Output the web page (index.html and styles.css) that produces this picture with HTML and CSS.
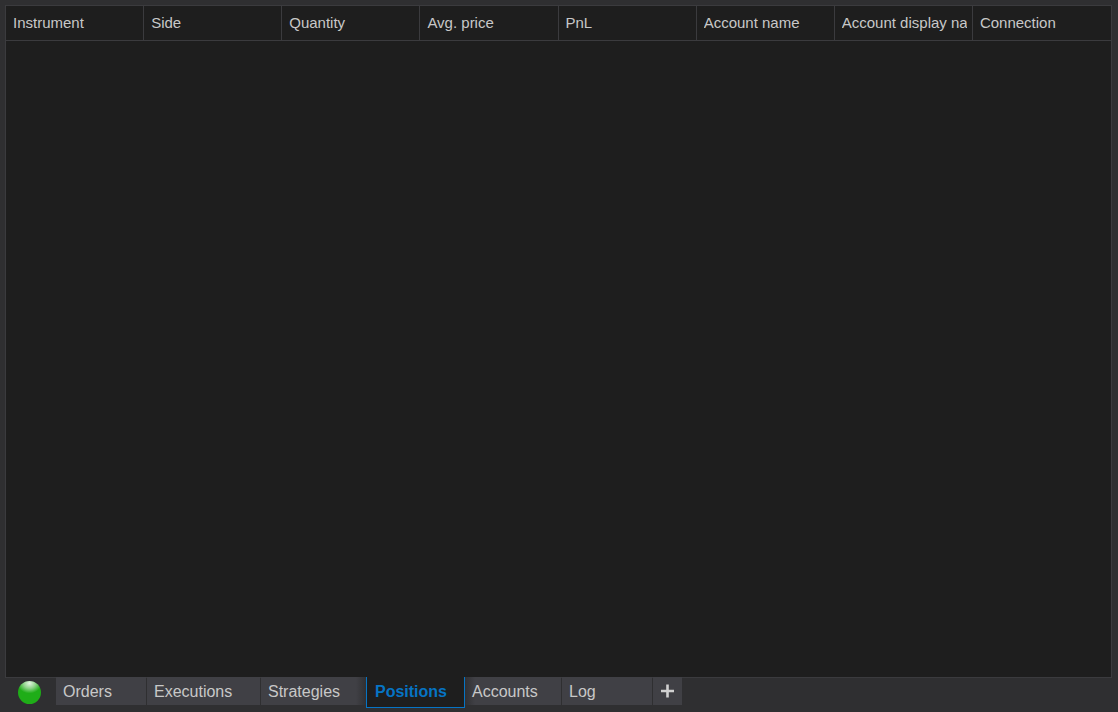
FILE: index.html
```html
<!DOCTYPE html>
<html lang="en">
<head>
    <meta charset="UTF-8">
    <meta name="viewport" content="width=device-width, initial-scale=1.0">
    <title>Positions</title>
    <link rel="stylesheet" href="styles.css">
</head>
<body>
    <div class="window">
        <main class="grid-panel">
            <table class="positions-table">
                <thead>
                    <tr>
                        <th><div class="label">Instrument</div></th>
                        <th><div class="label">Side</div></th>
                        <th><div class="label">Quantity</div></th>
                        <th><div class="label">Avg. price</div></th>
                        <th><div class="label">PnL</div></th>
                        <th><div class="label">Account name</div></th>
                        <th><div class="label">Account display na</div></th>
                        <th><div class="label">Connection</div></th>
                    </tr>
                </thead>
                <tbody>
                    <!-- Position rows will go here -->
                </tbody>
            </table>
        </main>

        <nav class="tab-bar">
            <span class="status-light"></span>
            <button type="button" class="tab">Orders</button>
            <button type="button" class="tab executions">Executions</button>
            <button type="button" class="tab strategies">Strategies</button>
            <button type="button" class="tab active">Positions</button>
            <button type="button" class="tab accounts">Accounts</button>
            <button type="button" class="tab">Log</button>
            <button type="button" class="tab-add" aria-label="Add tab">
                <svg width="14" height="14" viewBox="0 0 14 14">
                    <path d="M6.5 0.5v13M0 7h13" stroke="#d0d0d0" stroke-width="2.6" fill="none"/>
                </svg>
            </button>
        </nav>
    </div>
</body>
</html>
```

FILE: styles.css
```css
* {
    box-sizing: border-box;
}

body {
    font-family: "Liberation Sans", Arial, sans-serif;
    background-color: #2f2f31;
    color: #c8c8c8;
    margin: 0;
}

.window {
    display: flex;
    flex-direction: column;
    height: 100vh;
    padding: 5px 6px 4px 5px;
}

.grid-panel {
    flex: 1;
    background-color: #1e1e1e;
    border: 1px solid #3b3b3e;
    border-bottom: none;
}

.positions-table {
    width: 100%;
    table-layout: fixed;
    border-collapse: separate;
    border-spacing: 0;
}

th {
    height: 35px;
    padding: 0 5px 2px 7px;
    border-right: 1px solid #3b3b3e;
    border-bottom: 1px solid #3b3b3e;
    font-size: 15px;
    font-weight: normal;
    text-align: left;
}

th:last-child {
    border-right: none;
}

.label {
    overflow: hidden;
    white-space: nowrap;
}

/* Tabs */
.tab-bar {
    display: flex;
    align-items: flex-start;
    height: 31px;
    padding-left: 13px;
    background: linear-gradient(#3b3b3e, #3b3b3e) top / 100% 1px no-repeat;
}

.status-light {
    width: 23px;
    height: 23px;
    margin: 4px 15px 0 0;
    border-radius: 50%;
    background: radial-gradient(ellipse 12px 10px at 50% 10%, #e4f5e2, #8fd48a 50%, transparent), #1fad18;
}

.tab {
    min-width: 90px;
    height: 28px;
    margin: 0 1px 0 0;
    padding: 2px 7px 0 7px;
    border: none;
    background-color: #404045;
    color: #c8c8c8;
    font-family: inherit;
    font-size: 16px;
    text-align: left;
    cursor: pointer;
}

.tab.executions {
    min-width: 113px;
}

/* the neighbours of the active tab fade towards it */
.tab.strategies {
    min-width: 105px;
    margin-right: 0;
    background-image: linear-gradient(to left, #303033, transparent 10px);
}

.tab.active {
    min-width: 99px;
    height: 31px;
    margin-right: 0;
    padding: 0 8px 1px 8px;
    border: 1px solid #0674c4;
    border-top: none;
    background-color: #1e1e1e;
    color: #0674c4;
    font-weight: bold;
}

.tab.accounts {
    min-width: 96px;
    background-image: linear-gradient(to right, #303033, transparent 10px);
}

.tab-add {
    display: flex;
    align-items: center;
    justify-content: center;
    width: 29px;
    height: 28px;
    padding: 0;
    border: none;
    background-color: #404045;
    cursor: pointer;
}
```
